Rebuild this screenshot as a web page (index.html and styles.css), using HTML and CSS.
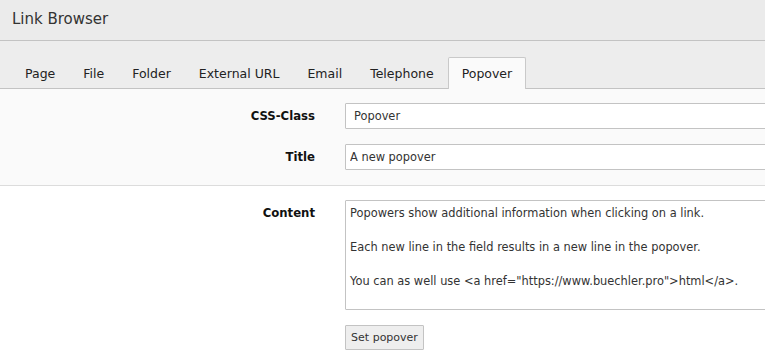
FILE: index.html
```html
<!DOCTYPE html>
<html lang="en">
<head>
  <meta charset="UTF-8">
  <title>Link Browser</title>
  <link rel="stylesheet" href="styles.css">
</head>
<body>
  <div class="header">Link Browser</div>

  <ul class="tabs">
    <li class="tab">Page</li>
    <li class="tab">File</li>
    <li class="tab">Folder</li>
    <li class="tab">External URL</li>
    <li class="tab">Email</li>
    <li class="tab">Telephone</li>
    <li class="tab active">Popover</li>
  </ul>

  <form class="section shaded">
    <div class="row">
      <label class="label" for="cssclass">CSS-Class</label>
      <input type="text" id="cssclass" class="field indent" value="Popover">
    </div>
    <div class="row">
      <label class="label" for="title">Title</label>
      <input type="text" id="title" class="field" value="A new popover">
    </div>
  </form>

  <form class="section">
    <div class="row top">
      <label class="label" for="content">Content</label>
      <textarea id="content" class="field area">Popowers show additional information when clicking on a link.

Each new line in the field results in a new line in the popover.

You can as well use &lt;a href="https://www.buechler.pro"&gt;html&lt;/a&gt;.</textarea>
    </div>
    <div class="row">
      <span class="label"></span>
      <button type="button" class="button">Set popover</button>
    </div>
  </form>
</body>
</html>
```

FILE: styles.css
```css
body {
  margin: 0;
  overflow: hidden;
  font-family: "DejaVu Sans", Verdana, sans-serif;
  font-size: 11px;
  color: #333;
  background-color: #fff;
}

.header {
  height: 40px;
  line-height: 38px;
  padding-left: 12px;
  font-size: 15px;
  color: #333;
  background-color: #ebebeb;
  border-bottom: 1px solid #c3c3c3;
}

.tabs {
  display: flex;
  margin: 0;
  padding: 16px 0 0 11px;
  list-style: none;
  background-color: #ededed;
  border-bottom: 1px solid #c3c3c3;
}

.tab {
  padding: 0 13px;
  height: 30px;
  line-height: 31px;
  font-size: 12.5px;
  color: #222;
  border: 1px solid transparent;
  border-bottom: none;
  margin-bottom: -1px;
}

.tab.active {
  background-color: #fafafa;
  border-color: #c9c9c9;
  border-radius: 2px 2px 0 0;
  height: 31px;
}

.section {
  display: flex;
  flex-direction: column;
  gap: 15px;
  margin: 0;
  padding: 14px 0 15px;
}

.shaded {
  background-color: #fafafa;
  border-bottom: 1px solid #dcdcdc;
}

.row {
  display: flex;
  align-items: center;
}

.row.top {
  align-items: flex-start;
}

.label {
  flex: 0 0 315px;
  margin-right: 30px;
  text-align: right;
  font-size: 11.7px;
  font-weight: bold;
  color: #111;
}

.row.top .label {
  padding-top: 6px;
}

.field {
  flex: 0 0 450px;
  box-sizing: border-box;
  height: 26px;
  padding: 0 4px;
  font-family: "DejaVu Sans", Verdana, sans-serif;
  font-size: 11.4px;
  color: #333;
  background-color: #fff;
  border: 1px solid #c3c3c3;
  border-radius: 1px;
}

.field.indent {
  padding-left: 8px;
}

.area {
  height: 110px;
  padding: 4px 4px;
  line-height: 17px;
  resize: none;
}

.button {
  box-sizing: border-box;
  width: 79px;
  height: 25px;
  padding: 0;
  font-family: "DejaVu Sans", Verdana, sans-serif;
  font-size: 11px;
  color: #333;
  background-color: #eee;
  border: 1px solid #c3c3c3;
  border-radius: 1px;
}
```
